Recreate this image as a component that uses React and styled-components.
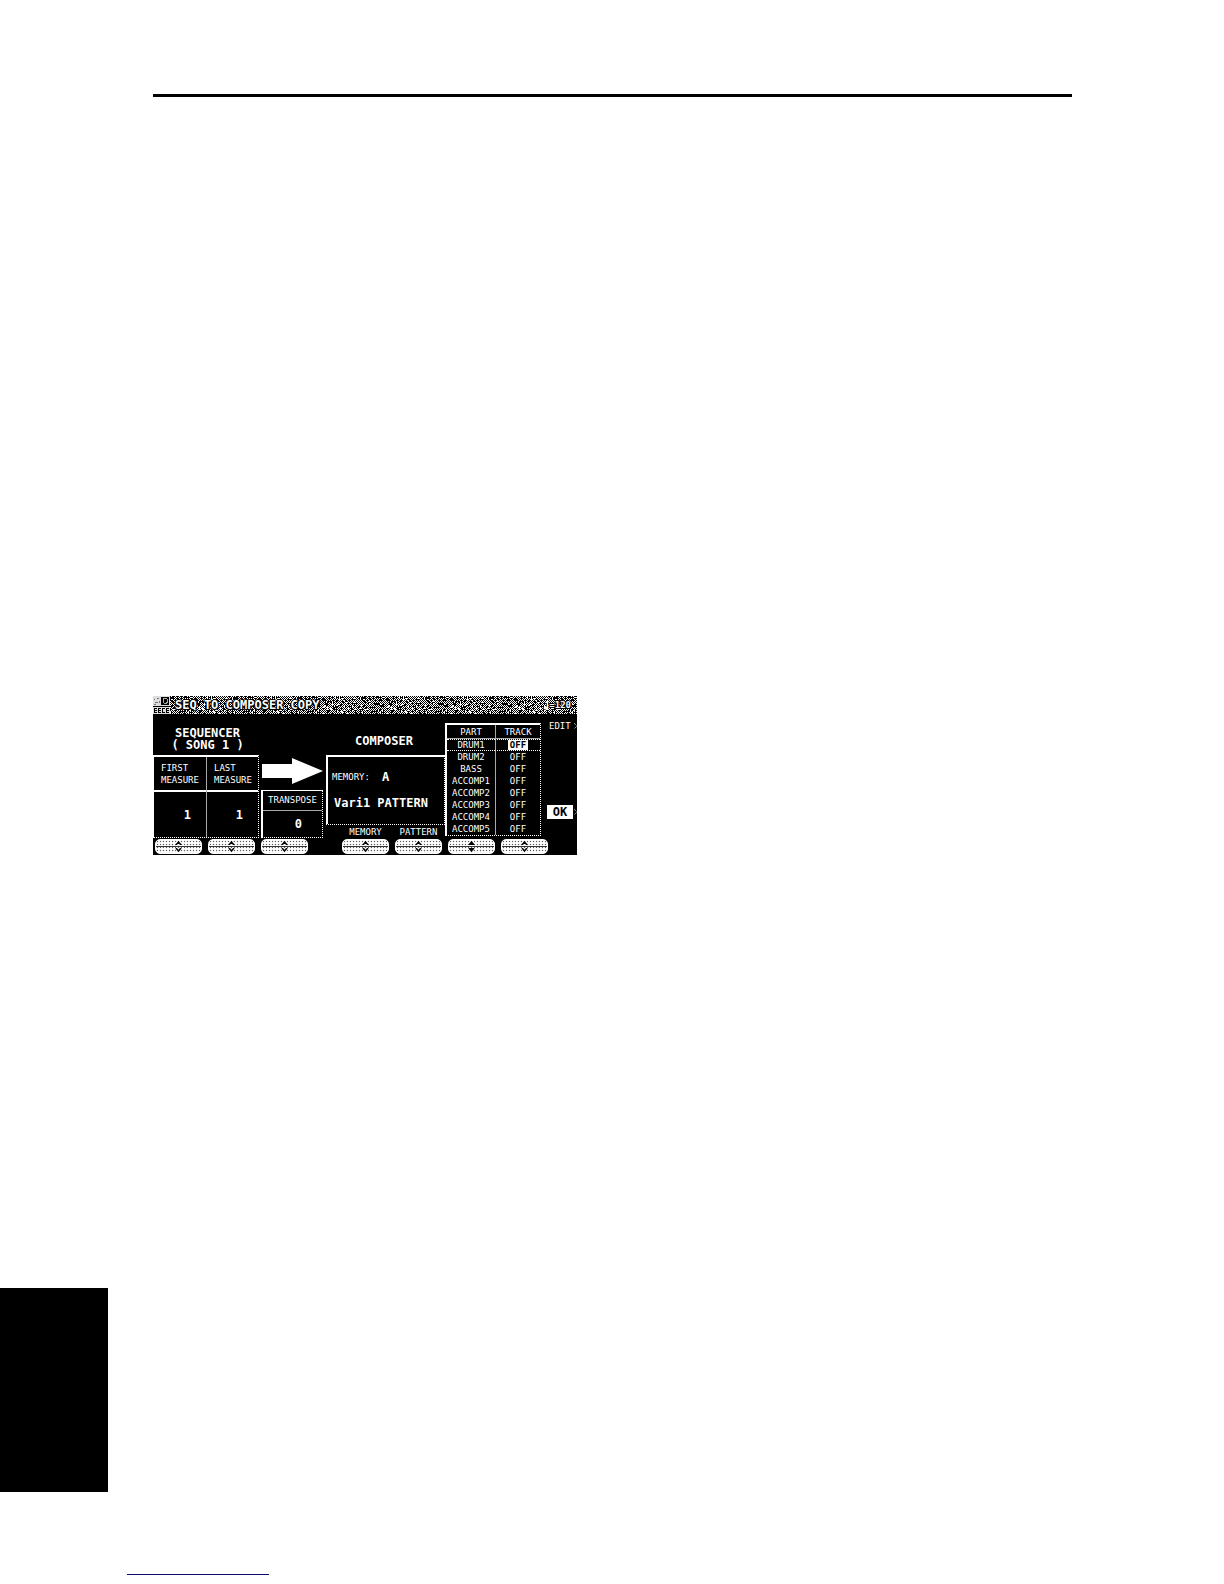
import styled, { createGlobalStyle } from "styled-components";

const GlobalStyle = createGlobalStyle`
  * {
    box-sizing: border-box;
  }
  body {
    margin: 0;
    background: #fff;
  }
`;

const Page = styled.main`
  display: flex;
  flex-direction: column;
  padding-top: 94px;
  padding-bottom: 9px;
`;

const Content = styled.section`
  margin: 0 152px 0 153px;
`;

const Rule = styled.hr`
  height: 3px;
  margin: 0 0 599px;
  border: 0;
  background: #000;
`;

const Screen = styled.div`
  width: 100%;
  max-width: 424px;
  background: #000;
  color: #fff;
  font: 9px/12px "DejaVu Sans Mono", "Liberation Mono", monospace;
`;

const TitleBar = styled.header`
  position: relative;
  display: flex;
  align-items: center;
  height: 18px;
  padding-right: 6px;
`;

const Dither = styled.svg`
  position: absolute;
  inset: 0;
  width: 100%;
  height: 100%;
`;

const Badge = styled.svg`
  position: relative;
  width: 17px;
  height: 18px;
  margin-right: 5px;
`;

const outline = `
  text-shadow: 1px 0 #000, -1px 0 #000, 0 1px #000, 0 -1px #000, 1px 1px #000, -1px 1px #000;
`;

const Title = styled.h1`
  position: relative;
  flex: 1;
  margin: 0;
  font-size: 12px;
  line-height: 18px;
  font-weight: 700;
  white-space: nowrap;
  ${outline}
`;

const Tempo = styled.span`
  position: relative;
  display: flex;
  align-items: center;
  font-weight: 700;
  ${outline}
`;

const Body = styled.div`
  display: grid;
  grid-template-columns: 106fr 67fr 119fr 98fr 34fr;
  height: 124px;
`;

const Column = styled.div`
  display: flex;
  flex-direction: column;
  min-width: 0;
`;

const Heading = styled.h2`
  display: flex;
  flex-direction: column;
  justify-content: center;
  height: 41px;
  margin: 0;
  padding: ${(p) => p.$inset || "9px 0 0 3px"};
  font-size: 12px;
  line-height: 12px;
  font-weight: 700;
  text-align: center;
  white-space: pre;
`;

const Box = styled.div`
  flex: 1;
  border: 2px solid #fff;
  border-right: 1px dotted #fff;
  border-bottom: 1px dotted #fff;
`;

const Measures = styled(Box)`
  display: grid;
  grid-template-columns: 1fr 1fr;
  border-left-width: 1px;
`;

const Field = styled.div`
  display: flex;
  flex-direction: column;

  & + & {
    border-left: 1px solid #aaa;
  }
`;

const FieldName = styled.div`
  display: flex;
  align-items: center;
  height: 35px;
  padding-left: 7px;
  border-bottom: 2px solid #fff;
`;

const Value = styled.output`
  flex: 1;
  display: flex;
  align-items: center;
  justify-content: flex-end;
  padding-right: ${(p) => p.$end || "15px"};
  font-size: 12px;
  font-weight: 700;
`;

const Arrow = styled.svg`
  width: 61px;
  height: 28px;
  margin: 43px 0 5px 3px;
`;

const Transpose = styled(Box)`
  display: flex;
  flex-direction: column;
  margin: 0 3px 0 2px;
  border-top-width: 1px;
`;

const TransposeName = styled.div`
  height: 20px;
  border-bottom: 1px solid #aaa;
  line-height: 18px;
  text-align: center;
`;

const Memory = styled(Box)`
  padding: 9px 0 0 4px;
`;

const MemoryLine = styled.div`
  display: flex;
  gap: 12px;
  height: 22px;
  line-height: 22px;
`;

const Big = styled.span`
  margin-left: 2px;
  font-size: 12px;
  line-height: 30px;
  font-weight: 700;
`;

const Letter = styled.span`
  font-size: 12px;
  font-weight: 700;
`;

const Captions = styled.div`
  display: grid;
  grid-template-columns: 1fr 1fr;
  height: 13px;
  padding: 1px 0 0 13px;
  text-align: center;
`;

const Parts = styled.table`
  width: 96px;
  margin-top: 9px;
  border-collapse: separate;
  border-spacing: 0;
  border: 2px solid #fff;
  border-right: 1px dotted #fff;
  border-bottom: 1px dotted #fff;
  text-align: center;
  table-layout: fixed;

  th,
  td {
    height: 12px;
    padding: 0;
    font-weight: 400;
    line-height: 10px;
  }
  th:last-child,
  td:last-child {
    width: 45px;
    border-left: 1px solid #aaa;
  }
  thead th {
    height: 14px;
    border-bottom: 1px solid #aaa;
  }
`;

const Row = styled.tr`
  td {
    border-top: ${(p) => (p.$active ? "1px dotted #fff" : "0")};
    border-bottom: ${(p) => (p.$active ? "1px dotted #fff" : "0")};
  }
`;

const Track = styled.span`
  display: inline-block;
  padding: 0 2px;
  background: ${(p) => (p.$active ? "#fff" : "none")};
  color: ${(p) => (p.$active ? "#000" : "#fff")};
  font-weight: ${(p) => (p.$active ? "700" : "400")};
`;

const Side = styled(Column)`
  justify-content: space-between;
  align-items: flex-start;
  padding: 6px 0 19px 4px;
`;

const EditButton = styled.button`
  display: flex;
  align-items: center;
  gap: 3px;
  padding: 0 0 0 2px;
  border: 0;
  background: none;
  color: #fff;
  font: inherit;
`;

const OkButton = styled.button`
  display: flex;
  align-items: center;
  gap: 1px;
  padding: 0;
  border: 0;
  background: none;
  font: inherit;
  font-size: 12px;
  font-weight: 700;

  span {
    width: 26px;
    background: #fff;
    color: #000;
    line-height: 14px;
  }
`;

const Rockers = styled.div`
  display: flex;
  justify-content: space-between;
  padding: 1px 29px 1px 2px;
`;

const RockerGroup = styled.div`
  display: flex;
  gap: 6px;
`;

const Rocker = styled.div`
  display: flex;
  flex-direction: column;
  width: 47px;
  height: 15px;
  overflow: hidden;
  border: 1px solid #fff;
  border-radius: 5px;
  background: radial-gradient(circle, #555 0 20%, #fff 50%) 0 0 / 3px 3px;
`;

const RockerHalf = styled.button`
  display: flex;
  flex: 1;
  align-items: center;
  justify-content: center;
  padding: 0;
  border: 0;
  border-radius: 0;
  background: none;

  & + & {
    border-top: 1px solid #333;
  }
`;

const Thumb = styled.div`
  width: 108px;
  height: 204px;
  margin-top: 433px;
  background: #000;
`;

const Underline = styled.div`
  width: 142px;
  height: 1px;
  margin: 82px 0 0 127px;
  background: #0a0a78;
`;

const parts = ["DRUM1", "DRUM2", "BASS", "ACCOMP1", "ACCOMP2", "ACCOMP3", "ACCOMP4", "ACCOMP5"];

// one tile of irregular on/off dots, as the LCD shades its title bar
const tile = () => {
  let d = "";
  let seed = 7;
  for (let y = 0; y < 18; y++) {
    for (let x = 0; x < 64; x++) {
      seed = (seed * 16807) % 2147483647;
      const r = seed / 2147483647;
      const on = (x + y) % 2 === 0 ? r < 0.76 : r < 0.05;
      if (on) d += `M${x} ${y}h1v1h-1z`;
    }
  }
  return d;
};
const dots = tile();

const Chevron = ({ down, solid }) => (
  <svg width="9" height="4" viewBox="0 0 9 4" aria-hidden="true">
    <path
      d={down ? "M2 0l2.5 3L7 0" : "M2 4l2.5-3L7 4"}
      fill={solid ? "#000" : "#fff"}
      stroke="#000"
      strokeWidth="1.5"
    />
  </svg>
);

const Pointer = () => (
  <svg width="4" height="8" viewBox="0 0 4 8" aria-hidden="true">
    <path d="M0 1l3 3-3 3" fill="none" stroke="#ccc" strokeDasharray="1 1" />
  </svg>
);

const RockerSwitch = ({ name, solid }) => (
  <Rocker>
    <RockerHalf aria-label={`${name} up`}>
      <Chevron solid={solid} />
    </RockerHalf>
    <RockerHalf aria-label={`${name} down`}>
      <Chevron down solid={solid} />
    </RockerHalf>
  </Rocker>
);

const App = () => {
  return (
    <>
      <GlobalStyle />
      <Page>
        <Content>
          <Rule />
          <Screen>
            <TitleBar>
              <Dither aria-hidden="true" shapeRendering="crispEdges">
                <defs>
                  <pattern id="dots" width="64" height="18" patternUnits="userSpaceOnUse">
                    <path d={dots} fill="#fff" />
                  </pattern>
                </defs>
                <rect width="100%" height="100%" fill="url(#dots)" />
              </Dither>
              <Badge viewBox="0 0 17 18" shapeRendering="crispEdges" aria-hidden="true">
                <path d="M0 0h17v18H0z" fill="#ddd" />
                <path d="M8 1h8v8H8z" fill="#000" />
                <path d="M10 2h4v1h1v4h-1v1h-3V7h-1z" fill="#aaa" />
                <path d="M11 3h3v3h-1v1h-2z" fill="#000" />
                <path d="M1 3h1v1H1zM4 2h2v1H4zM2 6h3v1H2zM6 5h1v2H6zM1 8h2v1H1z" fill="#777" />
                <path d="M0 10h17v1H0zM1 12h3v1H2v1h2v1H2v1h2v1H1zM5 12h3v1H6v1h2v1H6v1h2v1H5zM9 12h3v1h-2v3h2v1H9zM13 12h3v1h-2v1h2v1h-2v1h2v1h-3z" fill="#000" />
              </Badge>
              <Title>SEQ TO COMPOSER COPY</Title>
              <Tempo>
                <svg width="6" height="9" viewBox="0 0 6 9" aria-hidden="true">
                  <path d="M4.5 0v7" stroke="#fff" strokeWidth="1.5" />
                  <ellipse cx="3" cy="7" rx="2.5" ry="1.5" fill="#fff" />
                </svg>
                =120
              </Tempo>
            </TitleBar>
            <Body>
              <Column>
                <Heading>
                  <span>SEQUENCER</span>
                  <span>( SONG 1 )</span>
                </Heading>
                <Measures>
                  <Field>
                    <FieldName>FIRST<br />MEASURE</FieldName>
                    <Value>1</Value>
                  </Field>
                  <Field>
                    <FieldName>LAST<br />MEASURE</FieldName>
                    <Value>1</Value>
                  </Field>
                </Measures>
              </Column>
              <Column>
                <Arrow viewBox="0 0 61 28" aria-hidden="true">
                  <path d="M0 7h30V1l31 13-31 13v-6H0z" fill="#fff" />
                </Arrow>
                <Transpose>
                  <TransposeName>TRANSPOSE</TransposeName>
                  <Value $end="20px">0</Value>
                </Transpose>
              </Column>
              <Column>
                <Heading $inset="12px 3px 0 0">COMPOSER</Heading>
                <Memory>
                  <MemoryLine>
                    <span>MEMORY:</span>
                    <Letter>A</Letter>
                  </MemoryLine>
                  <Big>Vari1 PATTERN</Big>
                </Memory>
                <Captions>
                  <span>MEMORY</span>
                  <span>PATTERN</span>
                </Captions>
              </Column>
              <Column>
                <Parts>
                  <thead>
                    <tr>
                      <th>PART</th>
                      <th>TRACK</th>
                    </tr>
                  </thead>
                  <tbody>
                    {parts.map((part, i) => (
                      <Row key={part} $active={i === 0}>
                        <td>{part}</td>
                        <td>
                          <Track $active={i === 0}>OFF</Track>
                        </td>
                      </Row>
                    ))}
                  </tbody>
                </Parts>
              </Column>
              <Side>
                <EditButton>
                  EDIT
                  <Pointer />
                </EditButton>
                <OkButton>
                  <span>OK</span>
                  <Pointer />
                </OkButton>
              </Side>
            </Body>
            <Rockers>
              <RockerGroup>
                <RockerSwitch name="First measure" />
                <RockerSwitch name="Last measure" />
                <RockerSwitch name="Transpose" />
              </RockerGroup>
              <RockerGroup>
                <RockerSwitch name="Memory" />
                <RockerSwitch name="Pattern" />
                <RockerSwitch name="Part" solid />
                <RockerSwitch name="Track" />
              </RockerGroup>
            </Rockers>
          </Screen>
        </Content>
        <Thumb />
        <Underline />
      </Page>
    </>
  );
};

export default App;
